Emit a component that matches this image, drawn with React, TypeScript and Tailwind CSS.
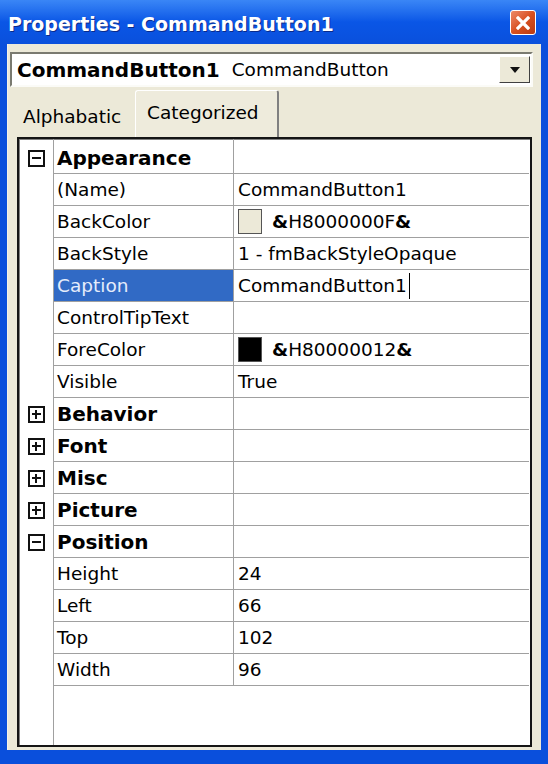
import { ReactNode } from 'react';

const font = "font-['DejaVu_Sans',sans-serif]";

const ExpandBox = ({ open }: { open: boolean }) => (
	<div className="relative h-[17px] w-[17px] border-2 border-[#111] bg-white">
		<div className="absolute left-[2px] top-[5.5px] h-[2px] w-[9px] bg-[#111]" />
		{open ? null : <div className="absolute left-[5.5px] top-[2px] h-[9px] w-[2px] bg-[#111]" />}
	</div>
);

const Swatch = ({ color }: { color: string }) => (
	<div className={`mr-[10px] h-[25px] w-[24px] border border-[#555] ${color}`} />
);

type RowProps = {
	label: string;
	value?: ReactNode;
	category?: 'open' | 'closed';
	selected?: boolean;
};

const Row = ({ label, value, category, selected }: RowProps) => (
	<div className="flex h-[32px]">
		<div className="flex w-[35px] shrink-0 items-center justify-center border-r border-[#a0a0a0]">
			{category ? <ExpandBox open={category === 'open'} /> : null}
		</div>
		<div
			className={`flex w-[180px] shrink-0 items-center border-r border-b border-[#a0a0a0] pl-[3px] ${
				selected ? 'bg-[#316ac5] text-[#e4ecfb]' : ''
			} ${category ? 'text-[20px] font-bold' : ''}`}
		>
			{label}
		</div>
		<div className="flex w-[295px] shrink-0 items-center border-b border-[#a0a0a0] pl-[4px]">{value}</div>
	</div>
);

export default function App() {
	return (
		<div className={`flex h-[764px] w-[548px] flex-col bg-[#0a4fdc] text-[18.5px] text-black ${font}`}>
			<div className="flex h-[44px] shrink-0 items-center justify-between bg-gradient-to-b from-[#3a86f6] via-[#0a56e6] to-[#0a50dc] pr-[12px] pl-[8px] pt-[5px]">
				<span className="text-[19px] font-bold text-white [text-shadow:1px_1px_0_#0a2a8a]">
					Properties - CommandButton1
				</span>
				<div className="mb-[4px] flex h-[25px] w-[26px] items-center justify-center rounded-[3px] border border-white bg-gradient-to-br from-[#ec8a68] via-[#d9501f] to-[#b83a12]">
					<svg width="14" height="14" viewBox="0 0 14 14">
						<path d="M2 2 L12 12 M12 2 L2 12" stroke="white" strokeWidth="3.2" strokeLinecap="square" />
					</svg>
				</div>
			</div>

			<div className="mx-[7px] mb-[14px] flex flex-1 flex-col border-l border-[#f4f2e8] bg-[#ece9d8]">
				<div className="mt-[8px] ml-[2px] mr-[8px] flex h-[35px] items-center border-2 border-t-[#7a7a70] border-l-[#7a7a70] border-r-[#fbfbf7] border-b-[#fbfbf7] bg-white pr-[1px]">
					<div className="flex flex-1 items-center pl-[5px]">
						<span className="text-[20px] font-bold">CommandButton1</span>
						<span className="ml-[12px]">CommandButton</span>
					</div>
					<div className="flex h-[27px] w-[31px] items-center justify-center border border-t-[#fff] border-l-[#fff] border-r-[#404040] border-b-[#404040] bg-[#ece9d8]">
						<svg width="10" height="6" viewBox="0 0 10 6">
							<path d="M0 0 H10 L5 6 Z" fill="#111" />
						</svg>
					</div>
				</div>

				<div className="mt-[3px] flex h-[47px] items-end pl-[9px]">
					<div className="flex h-[41px] w-[118px] items-center pl-[6px]">Alphabatic</div>
					<div className="flex h-[47px] w-[144px] items-center rounded-t-[3px] border-t border-l border-r-2 border-t-white border-l-white border-r-[#808080] bg-[#eeebdc] pl-[11px] pb-[2px]">
						Categorized
					</div>
				</div>

				<div className="mb-[3px] ml-[9px] mr-[9px] flex flex-1 flex-col border-2 border-[#151515] bg-white shadow-[inset_1px_1px_0_#808080]">
					<div className="flex h-[3px]">
						<div className="w-[35px] border-r border-[#a0a0a0]" />
						<div className="w-[180px] border-r border-[#a0a0a0]" />
					</div>
					<Row label="Appearance" category="open" />
					<Row label="(Name)" value="CommandButton1" />
					<Row
						label="BackColor"
						value={
							<>
								<Swatch color="bg-[#ece9d8]" />
								<span className="font-bold">&amp;</span>H8000000F<span className="font-bold">&amp;</span>
							</>
						}
					/>
					<Row label="BackStyle" value="1 - fmBackStyleOpaque" />
					<Row
						label="Caption"
						selected
						value={
							<>
								CommandButton1
								<span className="ml-[2px] h-[26px] w-[1px] bg-black" />
							</>
						}
					/>
					<Row label="ControlTipText" />
					<Row
						label="ForeColor"
						value={
							<>
								<Swatch color="bg-black" />
								<span className="font-bold">&amp;</span>H80000012<span className="font-bold">&amp;</span>
							</>
						}
					/>
					<Row label="Visible" value="True" />
					<Row label="Behavior" category="closed" />
					<Row label="Font" category="closed" />
					<Row label="Misc" category="closed" />
					<Row label="Picture" category="closed" />
					<Row label="Position" category="open" />
					<Row label="Height" value="24" />
					<Row label="Left" value="66" />
					<Row label="Top" value="102" />
					<Row label="Width" value="96" />
					<div className="flex flex-1">
						<div className="w-[35px] border-r border-[#a0a0a0]" />
					</div>
				</div>
			</div>
		</div>
	);
}
